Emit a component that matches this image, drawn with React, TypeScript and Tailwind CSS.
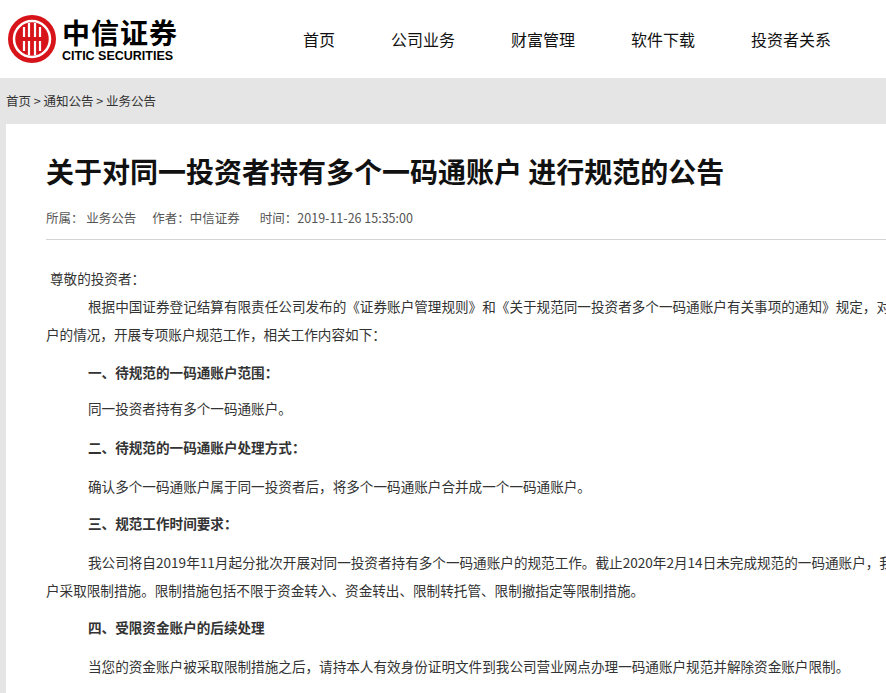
export default function App() {
  const font = { fontFamily: '"Microsoft YaHei","Noto Sans CJK SC",sans-serif' };
  const nav = ["首页", "公司业务", "财富管理", "软件下载", "投资者关系"];
  return (
    <div className="w-[886px] h-[693px] overflow-hidden bg-[#e5e5e5] text-[#333]" style={font}>
      <header className="h-[78px] bg-white flex items-center">
        <div className="flex items-center ml-[7px]">
          <svg width="50" height="50" viewBox="0 0 50 50">
            <circle cx="25" cy="25" r="24" fill="#d7141a" />
            <circle cx="25" cy="25" r="18" fill="none" stroke="#fff" strokeWidth="2.5" />
            <circle cx="25" cy="25" r="14" fill="#d7141a" />
            <g stroke="#fff" strokeWidth="2.2">
              <line x1="17" y1="13" x2="17" y2="37" />
              <line x1="22" y1="9" x2="22" y2="41" />
              <line x1="28" y1="9" x2="28" y2="41" />
              <line x1="33" y1="13" x2="33" y2="37" />
            </g>
            <rect x="12" y="23" width="26" height="4" fill="#d7141a" />
          </svg>
          <div className="ml-[5px] flex flex-col pt-[2px]">
            <span className="text-[28px] leading-[30px] font-bold text-black tracking-[1px]">中信证券</span>
            <span className="text-[12.5px] leading-[16px] mt-[1px] font-bold text-black" style={{ fontFamily: '"Liberation Sans",Arial,sans-serif' }}>CITIC SECURITIES</span>
          </div>
        </div>
        <nav className="flex ml-[125px] text-[16px] text-[#111]">
          {nav.map((n, i) => (
            <span key={n} className={i === 0 ? "" : "ml-[56px]"}>{n}</span>
          ))}
        </nav>
      </header>
      <div className="h-[46px] flex items-center pl-[6px] text-[12.5px] text-[#333] whitespace-pre">首页 &gt; 通知公告 &gt; 业务公告</div>
      <main className="ml-[6px] w-[960px] bg-white pl-[40px] pt-[26px] h-[600px]">
        <h1 className="text-[28px] font-bold text-[#111] leading-[42px]">关于对同一投资者持有多个一码通账户 进行规范的公告</h1>
        <div className="mt-[17px] text-[12.5px] text-[#555] flex whitespace-pre">
          <span>所属： 业务公告</span>
          <span className="ml-[16px]">作者：中信证券</span>
          <span className="ml-[20px]">时间：2019-11-26 15:35:00</span>
        </div>
        <div className="mt-[11px] h-px bg-[#d4d4d4] w-[900px]" />
        <div className="mt-[32px] text-[13.6px] leading-[28px] text-[#333] whitespace-nowrap">
          <p className="pl-[4px] -mt-[8px]">尊敬的投资者：</p>
          <p className="pl-[42px]">根据中国证券登记结算有限责任公司发布的《证券账户管理规则》和《关于规范同一投资者多个一码通账户有关事项的通知》规定，对同一投资者</p>
          <p>户的情况，开展专项账户规范工作，相关工作内容如下：</p>
          <p className="pl-[42px] mt-[10px] font-bold">一、待规范的一码通账户范围：</p>
          <p className="pl-[42px] mt-[8px]">同一投资者持有多个一码通账户。</p>
          <p className="pl-[42px] mt-[11px] font-bold">二、待规范的一码通账户处理方式：</p>
          <p className="pl-[42px] mt-[11px]">确认多个一码通账户属于同一投资者后，将多个一码通账户合并成一个一码通账户。</p>
          <p className="pl-[42px] mt-[9px] font-bold">三、规范工作时间要求：</p>
          <p className="pl-[42px] mt-[11px]">我公司将自2019年11月起分批次开展对同一投资者持有多个一码通账户的规范工作。截止2020年2月14日未完成规范的一码通账户，我公司将对该账</p>
          <p>户采取限制措施。限制措施包括不限于资金转入、资金转出、限制转托管、限制撤指定等限制措施。</p>
          <p className="pl-[42px] mt-[9px] font-bold">四、受限资金账户的后续处理</p>
          <p className="pl-[42px] mt-[11px]">当您的资金账户被采取限制措施之后，请持本人有效身份证明文件到我公司营业网点办理一码通账户规范并解除资金账户限制。</p>
        </div>
      </main>
    </div>
  );
}
